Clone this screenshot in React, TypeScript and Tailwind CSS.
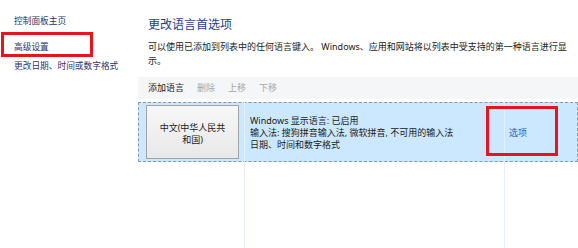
import React from "react";

export default function App() {
  const font = { fontFamily: '"Noto Sans", "Noto Sans CJK SC", sans-serif' };
  return (
    <div className="relative flex w-[578px] h-[248px] bg-white overflow-hidden text-[9px]" style={font}>
      {/* sidebar */}
      <div className="w-[138px] shrink-0 pl-[14px] pt-[14px] text-[#26336e] leading-[14px] text-[8.7px]">
        <div>控制面板主页</div>
        <div className="mt-[12px]">高级设置</div>
        <div className="mt-[5px]">更改日期、时间或数字格式</div>
      </div>

      {/* main */}
      <div className="flex-1 flex flex-col">
        <div className="pl-[10px] pt-[17px] text-[12px] leading-[16px] text-[#1e3c96]">更改语言首选项</div>
        <div className="pl-[10px] pt-[7px] w-[430px] leading-[14px] text-[#1a1a1a]">
          可以使用已添加到列表中的任何语言键入。 Windows、应用和网站将以列表中受支持的第一种语言进行显示。
        </div>
        <div className="mt-[9px] h-[22px] bg-[#f5f6f7] flex items-center gap-[13px] pl-[10px]">
          <span className="text-[#1a1a1a]">添加语言</span>
          <span className="text-[#a8a8a8]">删除</span>
          <span className="text-[#a8a8a8]">上移</span>
          <span className="text-[#a8a8a8]">下移</span>
        </div>
        <div className="relative flex-1 mt-[3px]">
          <div className="flex h-[60px] bg-[#cce8ff] border border-dashed border-[#8597ad]">
            <div className="w-[105px] shrink-0 flex items-center pl-[7px]">
              <div className="w-[93px] h-[54px] flex items-center justify-center text-center leading-[12px] text-[#1a1a1a] border border-[#a3a3a3] bg-gradient-to-b from-[#f7f7f7] to-[#e8e8e8] px-[10px] pt-[3px]">
                中文(中华人民共和国)
              </div>
            </div>
            <div className="w-[260px] shrink-0 flex flex-col justify-center pl-[6px] leading-[12px] text-[#1a1a1a] pt-[2px]">
              <div>Windows 显示语言: 已启用</div>
              <div>输入法: 搜狗拼音输入法, 微软拼音, 不可用的输入法</div>
              <div>日期、时间和数字格式</div>
            </div>
            <div className="flex-1 flex items-center pl-[5px] pt-[2px] text-[#2a5db0]">选项</div>
          </div>
          <div className="absolute left-[106px] top-0 bottom-0 w-px bg-[#e3f0fb]" />
          <div className="absolute left-[366px] top-0 bottom-0 w-px bg-[#e3f0fb]" />
        </div>
      </div>

      {/* red annotation boxes */}
      <div className="absolute left-[1px] top-[32px] w-[92px] h-[25px] border-[3px] border-[#e8141c]" />
      <div className="absolute left-[486px] top-[106px] w-[72px] h-[50px] border-[3px] border-[#e8141c]" />
    </div>
  );
}
